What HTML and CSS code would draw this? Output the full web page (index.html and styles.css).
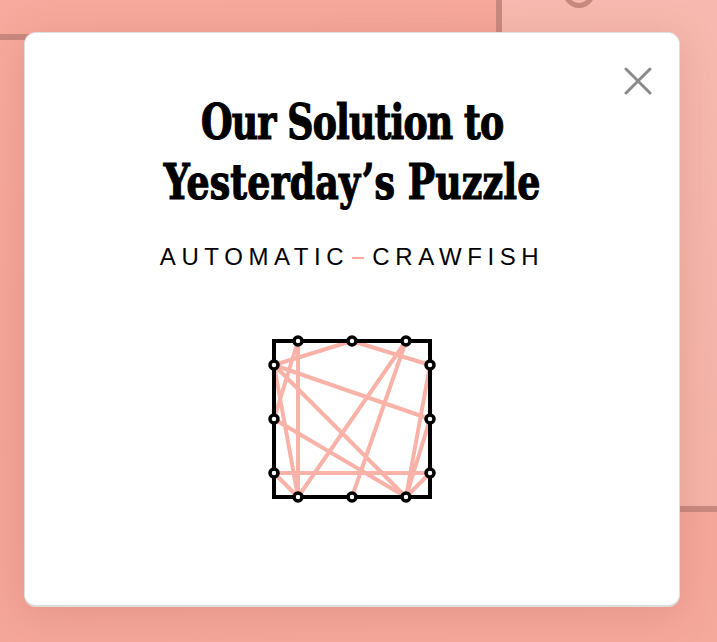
FILE: index.html
```html
<!DOCTYPE html>
<html lang="en">
<head>
<meta charset="utf-8">
<title>Our Solution to Yesterday's Puzzle</title>
<link rel="stylesheet" href="styles.css">
</head>
<body>
<div class="backdrop">
  <div class="board-panel"></div>
  <div class="board-line line-left"></div>
  <div class="board-line line-vert"></div>
  <div class="board-line line-right"></div>
  <div class="board-ring"></div>

  <div class="modal">
    <button class="close" aria-label="Close">
      <svg viewBox="0 0 28 28" width="28" height="28"><path d="M2 2 L26 26 M26 2 L2 26"/></svg>
    </button>
    <h1 class="title"><span class="title-line first">Our Solution to</span><span class="title-line second">Yesterday’s Puzzle</span></h1>
    <p class="answer"><span class="word">AUTOMATIC</span><span class="dash"></span><span class="word">CRAWFISH</span></p>
    <svg class="solution" viewBox="0 0 170 170" width="170" height="170">
      <polyline class="path" points="139,163 163,85 7,31 85,7 163,31 139,163 7,31 31,163 31,7 7,85 139,163 163,139 7,139 31,163 139,7 85,163"/>
      <rect class="frame" x="7" y="7" width="156" height="156"/>
      <g class="dots">
        <circle cx="31" cy="7" r="4"/><circle cx="85" cy="7" r="4"/><circle cx="139" cy="7" r="4"/>
        <circle cx="7" cy="31" r="4"/><circle cx="7" cy="85" r="4"/><circle cx="7" cy="139" r="4"/>
        <circle cx="163" cy="31" r="4"/><circle cx="163" cy="85" r="4"/><circle cx="163" cy="139" r="4"/>
        <circle cx="31" cy="163" r="4"/><circle cx="85" cy="163" r="4"/><circle cx="139" cy="163" r="4"/>
      </g>
    </svg>
  </div>
</div>
</body>
</html>
```
FILE: styles.css
```css
html, body {
  margin: 0;
  padding: 0;
}
body {
  background: #f5a89b;
  font-family: "Liberation Sans", Arial, sans-serif;
}
.backdrop {
  position: relative;
  width: 717px;
  height: 642px;
  overflow: hidden;
  padding: 32px 0 0 24px;
  box-sizing: border-box;
  background: linear-gradient(160deg, #f7aa9d 0%, #f4a598 50%, #f5a99b 100%);
}
.board-panel {
  position: absolute;
  left: 499px;
  top: 0;
  width: 240px;
  height: 509px;
  background: linear-gradient(160deg, #f7bab0, #f5b3a8);
}
.board-line {
  position: absolute;
  background: #c9897f;
}
.line-left { left: 0; top: 34px; width: 40px; height: 6px; }
.line-vert { left: 496px; top: 0; width: 6px; height: 60px; }
.line-right { left: 660px; top: 506px; width: 60px; height: 6px; }
.board-ring {
  position: absolute;
  left: 563px;
  top: -24px;
  width: 22px;
  height: 22px;
  border: 5px solid #c9897f;
  border-radius: 50%;
}
.modal {
  position: relative;
  width: 656px;
  height: 575px;
  box-sizing: border-box;
  background: #fff;
  border: 1px solid #dedede;
  border-bottom-width: 2px;
  border-radius: 12px;
  box-shadow: 0 6px 40px rgba(150, 60, 45, 0.18);
  display: flex;
  flex-direction: column;
  align-items: center;
  padding-top: 59px;
}
.close {
  position: absolute;
  top: 34px;
  right: 27px;
  width: 28px;
  height: 28px;
  padding: 0;
  border: 0;
  background: none;
  cursor: pointer;
}
.close svg {
  display: block;
  stroke: #8a8a8a;
  stroke-width: 3;
  stroke-linecap: round;
  fill: none;
}
.title {
  margin: 0;
  font-family: "DejaVu Serif Condensed", "DejaVu Serif", serif;
  font-weight: 700;
  font-size: 48px;
  line-height: 61px;
  text-align: center;
  color: #000;
  white-space: nowrap;
  -webkit-text-stroke: 1.2px #000;
  transform: scaleX(0.84);
}
.title-line {
  display: block;
}
.title-line.first {
  letter-spacing: -1px;
}
.title-line.second {
  letter-spacing: 0.2px;
  margin-top: -1px;
}
.answer {
  margin: 29px 0 0;
  font-size: 24px;
  line-height: 30px;
  letter-spacing: 5.6px;
  color: #000;
  display: flex;
  align-items: center;
}
.dash {
  display: inline-block;
  width: 12px;
  height: 2px;
  background: #f7a99c;
  margin: 2px 8px 0 3px;
}
.solution {
  display: block;
  margin-top: 62px;
}
.solution .path {
  fill: none;
  stroke: #f8b2a7;
  stroke-width: 4;
  stroke-linejoin: round;
  stroke-linecap: round;
}
.solution .frame {
  fill: none;
  stroke: #000;
  stroke-width: 4;
}
.solution .dots circle {
  fill: #fff;
  stroke: #000;
  stroke-width: 3.5;
}
```
